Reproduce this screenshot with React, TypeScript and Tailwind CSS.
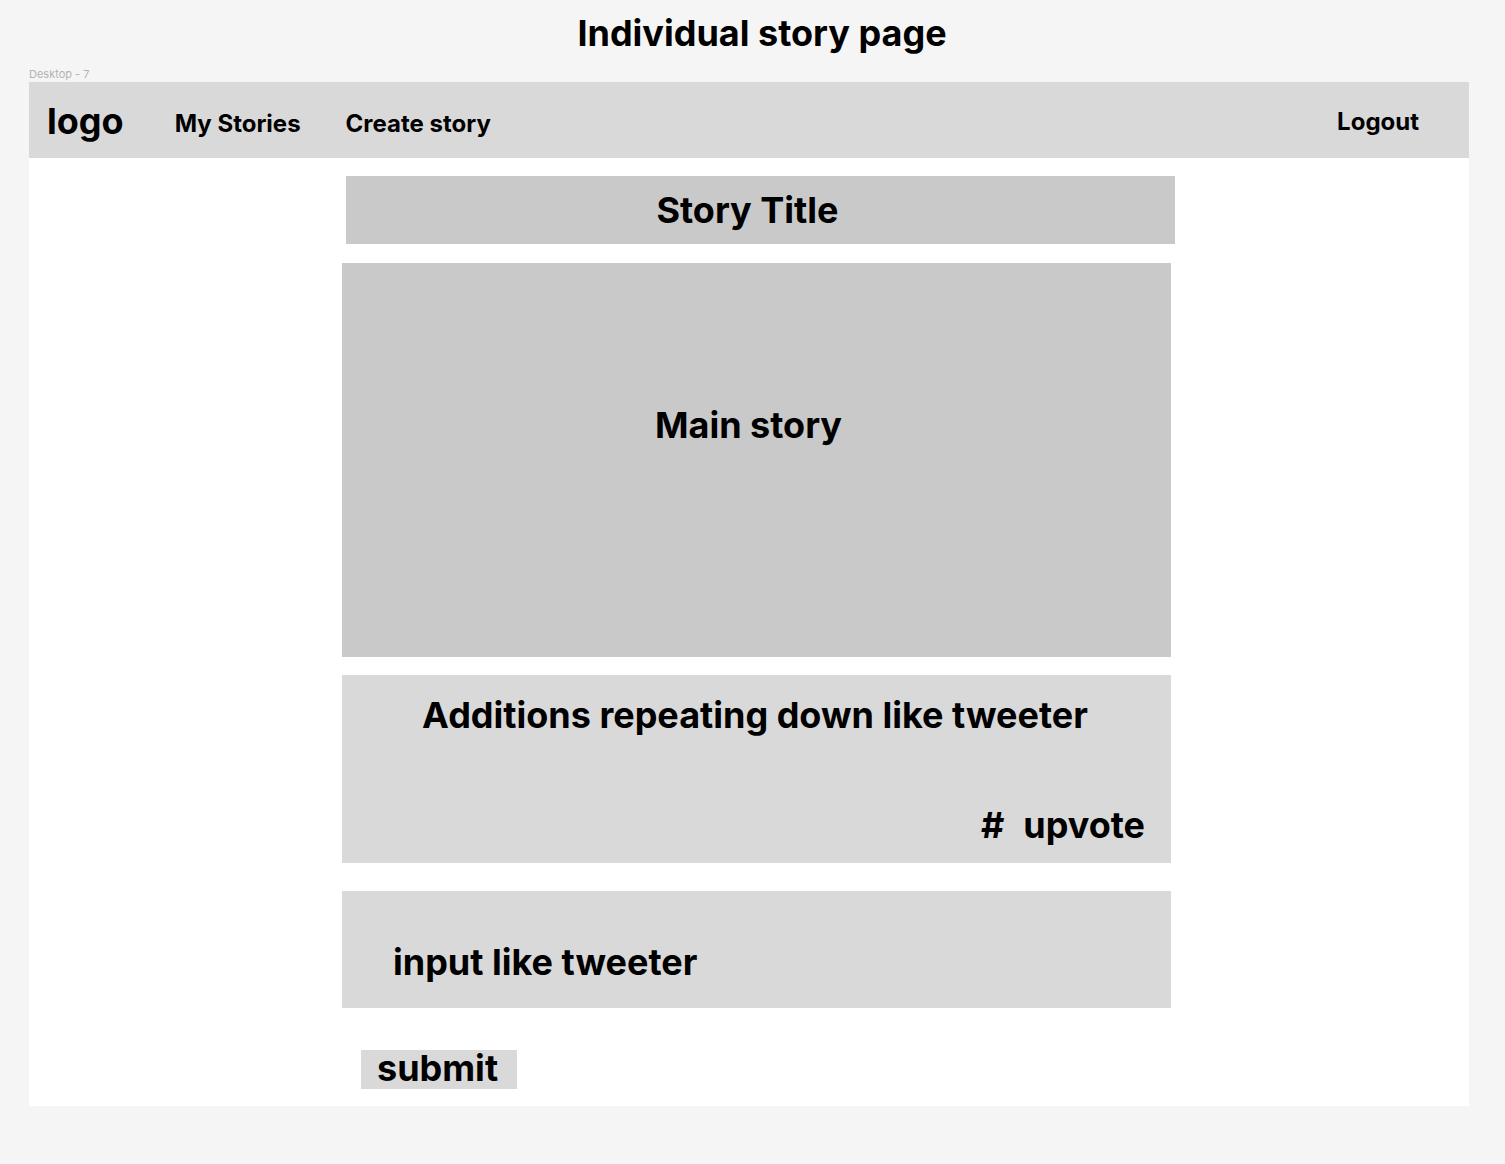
import React from "react";

export default function App() {
  return (
    <div
      className="min-h-[1164px] w-full bg-[#f5f5f5] text-black"
      style={{ fontFamily: "Inter, 'Noto Sans', sans-serif" }}
    >
      <div className="flex h-[66px] items-start justify-center pt-[10px]">
        <h1 className="pl-[19px] text-[36px] font-bold leading-[46px]">Individual story page</h1>
      </div>
      <div className="ml-[29px] h-[16px] text-[11px] leading-[16px] text-[#b3b3b3]">Desktop - 7</div>
      <div className="ml-[29px] flex h-[1024px] w-[1440px] flex-col bg-white">
        <nav className="flex h-[76px] items-center bg-[#d9d9d9] pl-[18px] pr-[50px]">
          <span className="pt-[2px] text-[36px] font-bold leading-[46px]">logo</span>
          <span className="ml-[51px] pt-[7px] text-[24px] font-bold leading-[30px]">My Stories</span>
          <span className="ml-[45px] pt-[7px] text-[24px] font-bold leading-[30px]">Create story</span>
          <span className="ml-auto pt-[3px] text-[24px] font-bold leading-[30px]">Logout</span>
        </nav>
        <div className="flex flex-col pl-[313px]">
          <div className="ml-[4px] mt-[18px] flex h-[68px] w-[829px] items-center justify-center bg-[#c9c9c9] pr-[26px]">
            <span className="text-[36px] font-bold leading-[44px]">Story Title</span>
          </div>
          <div className="mt-[19px] flex h-[394px] w-[829px] justify-center bg-[#c9c9c9] pr-[16px] pt-[140px]">
            <span className="text-[36px] font-bold leading-[44px]">Main story</span>
          </div>
          <div className="mt-[18px] flex h-[188px] w-[829px] flex-col bg-[#d9d9d9]">
            <div className="mt-[18px] pr-[3px] text-center text-[36px] font-bold leading-[44px]">
              Additions repeating down like tweeter
            </div>
            <div className="mt-[66px] flex justify-end pr-[26px] text-[36px] font-bold leading-[44px]">
              <span>#</span>
              <span className="ml-[19px]">upvote</span>
            </div>
          </div>
          <div className="mt-[28px] flex h-[117px] w-[829px] items-start bg-[#d9d9d9] pl-[51px] pt-[49px]">
            <span className="text-[36px] font-bold leading-[44px]">input like tweeter</span>
          </div>
          <div className="ml-[19px] mt-[42px] flex h-[39px] w-[156px] items-start bg-[#d9d9d9] pl-[16px]">
            <span className="-mt-[2px] text-[36px] font-bold leading-[40px]">submit</span>
          </div>
        </div>
      </div>
    </div>
  );
}
